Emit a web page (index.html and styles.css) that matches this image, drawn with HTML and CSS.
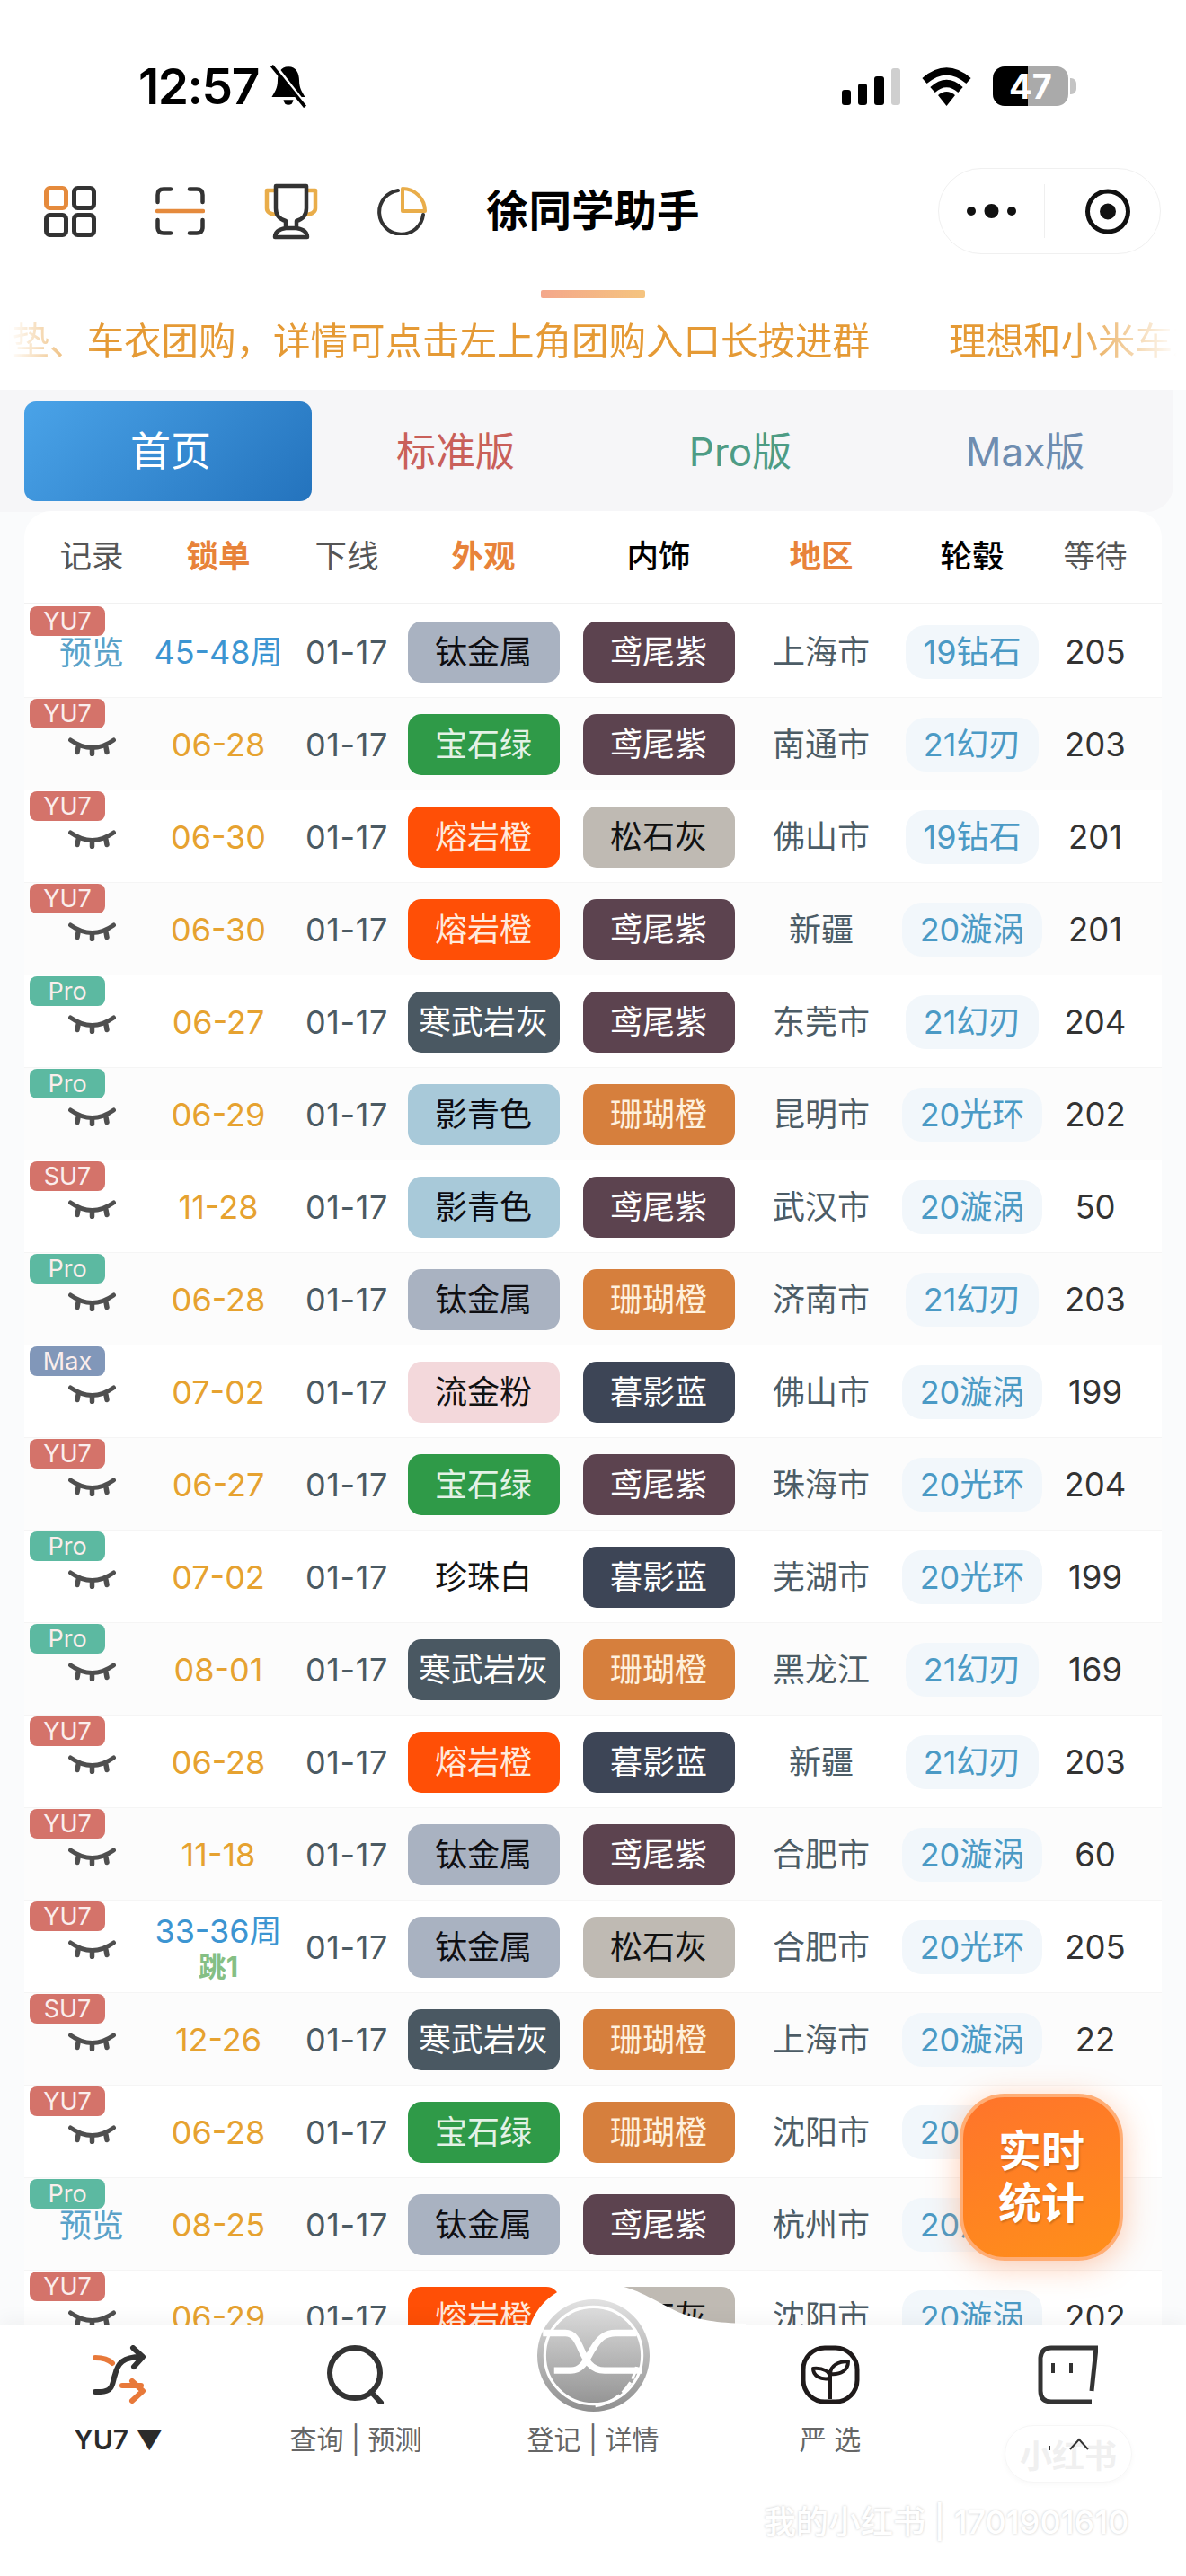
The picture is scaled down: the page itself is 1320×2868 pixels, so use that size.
FILE: index.html
```html
<!DOCTYPE html>
<html lang="zh-CN">
<head>
<meta charset="utf-8">
<title>徐同学助手</title>
<link rel="stylesheet" href="styles.css">
</head>
<body>
<svg class="defs" width="0" height="0" aria-hidden="true">
  <symbol id="eye" viewBox="0 0 53 21">
    <path d="M2.500 3 Q26.500 20 50.500 3" fill="none" stroke="#4f4f4f" stroke-width="5" stroke-linecap="round"/>
    <path d="M11 11 L10 16.500 M26.500 13 V18.500 M42 11 L43 16.500" fill="none" stroke="#4f4f4f" stroke-width="5.500" stroke-linecap="round"/>
  </symbol>
</svg>
<div class="page">
  <header class="status">
    <div class="status-left">
      <span class="time">12:57</span>
      <svg class="bell" width="46" height="48" viewBox="0 0 42 44"><path d="M21 2 C13 2 10 9 10 16 C10 24 7 28 4 33 H38 C35 28 32 24 32 16 C32 9 29 2 21 2Z" fill="#000"/><path d="M16 36 a5 5 0 0 0 10 0Z" fill="#000"/><path d="M8 3 L39 43" stroke="#fff" stroke-width="5"/><path d="M4 1 L38 43" stroke="#000" stroke-width="3.500"/></svg>
    </div>
    <div class="status-right">
      <svg width="65" height="41" viewBox="0 0 65 41"><rect x="0" y="24" width="10" height="17" rx="3" fill="#000"/><rect x="18" y="17" width="10" height="24" rx="3" fill="#000"/><rect x="36" y="9" width="11" height="32" rx="3" fill="#000"/><rect x="55" y="0" width="10" height="41" rx="3" fill="#cfcfcf"/></svg>
      <svg width="57" height="43" viewBox="0 0 57 43"><path d="M4 15 Q28.500 -6 53 15" fill="none" stroke="#000" stroke-width="8"/><path d="M13 25 Q28.500 11 44 25" fill="none" stroke="#000" stroke-width="8"/><path d="M19 31 Q28.500 23 38 31 L28.500 43Z" fill="#000"/></svg>
      <div class="battery"><span>47</span></div>
    </div>
  </header>

  <div class="topbar">
    <div class="top-icons">
      <svg width="58" height="57" viewBox="0 0 58 57" fill="none" stroke-width="5"><rect x="2.500" y="2.500" width="22" height="22" rx="4" stroke="#e58a3c"/><rect x="33.500" y="2.500" width="22" height="22" rx="4" stroke="#333"/><rect x="2.500" y="32.500" width="22" height="22" rx="4" stroke="#333"/><rect x="33.500" y="32.500" width="22" height="22" rx="4" stroke="#333"/></svg>
      <svg width="55" height="54" viewBox="0 0 55 54" fill="none" stroke-width="4.500" stroke-linecap="round"><path d="M17 2.500 H9 Q2.500 2.500 2.500 9 V17 M38 2.500 H46 Q52.500 2.500 52.500 9 V17 M2.500 37 V45 Q2.500 51.500 9 51.500 H17 M52.500 37 V45 Q52.500 51.500 46 51.500 H38" stroke="#333"/><path d="M2 27 H53" stroke="#e58a3c"/></svg>
      <svg width="60" height="63" viewBox="0 0 60 63" fill="none" stroke-width="4.500" stroke-linecap="round" stroke-linejoin="round"><path d="M13 8 H3 V28 Q3 34 14 35 M47 8 H57 V28 Q57 34 46 35" stroke="#e9ad4a"/><path d="M13 3 H47 V28 Q47 39 36 42 V50 H24 V42 Q13 39 13 28Z M24 50 Q12 52 12 60 H48 Q48 52 36 50" stroke="#333"/></svg>
      <svg width="55" height="54" viewBox="0 0 55 54" fill="none" stroke-width="4" stroke-linecap="round"><path d="M23 4 A24.500 24.500 0 1 0 51 31" stroke="#333"/><path d="M28 2 A25 25 0 0 1 53 27 H28Z" stroke="#e9ad4a" stroke-linejoin="round"/></svg>
    </div>
    <h1 class="title">徐同学助手</h1>
    <div class="capsule">
      <div class="capsule-part"><svg width="55" height="18" viewBox="0 0 55 18"><circle cx="5" cy="9" r="5" fill="#111"/><circle cx="27.500" cy="9" r="8" fill="#111"/><circle cx="50" cy="9" r="5" fill="#111"/></svg></div>
      <div class="capsule-part capsule-target"><svg width="50" height="51" viewBox="0 0 50 51"><circle cx="25" cy="25.500" r="22.500" fill="none" stroke="#111" stroke-width="5"/><circle cx="25" cy="25.500" r="9" fill="#111"/></svg></div>
    </div>
  </div>

  <div class="indicator"></div>
  <div class="notice">
    <div class="notice-track">
      <span>脚垫、车衣团购&#65292;详情可点击左上角团购入口长按进群</span>
      <span>理想和小米车友</span>
    </div>
  </div>

  <main class="main">
    <nav class="tabs">
      <a class="tab tab-home">首页</a>
      <a class="tab tab-std">标准版</a>
      <a class="tab tab-pro">Pro版</a>
      <a class="tab tab-max">Max版</a>
    </nav>
    <section class="card">
      <div class="grid head">
        <span class="h-gray">记录</span><span class="h-orange">锁单</span><span class="h-gray">下线</span><span class="h-orange">外观</span><span class="h-black">内饰</span><span class="h-orange">地区</span><span class="h-black">轮毂</span><span class="h-gray">等待</span>
      </div>
      <div class="rows">
        <div class="grid row"><b class="tag tag-red">YU7</b><span class="rec">预览</span><span class="lock lock-blue">45-48周</span><span class="off">01-17</span><span class="pill ti">钛金属</span><span class="pill iris">鸢尾紫</span><span class="city">上海市</span><span class="hub"><i>19钻石</i></span><span class="wait">205</span></div>
        <div class="grid row"><b class="tag tag-red">YU7</b><span class="rec"><svg class="eye"><use href="#eye"/></svg></span><span class="lock">06-28</span><span class="off">01-17</span><span class="pill jade">宝石绿</span><span class="pill iris">鸢尾紫</span><span class="city">南通市</span><span class="hub"><i>21幻刃</i></span><span class="wait">203</span></div>
        <div class="grid row"><b class="tag tag-red">YU7</b><span class="rec"><svg class="eye"><use href="#eye"/></svg></span><span class="lock">06-30</span><span class="off">01-17</span><span class="pill lava">熔岩橙</span><span class="pill stone">松石灰</span><span class="city">佛山市</span><span class="hub"><i>19钻石</i></span><span class="wait">201</span></div>
        <div class="grid row"><b class="tag tag-red">YU7</b><span class="rec"><svg class="eye"><use href="#eye"/></svg></span><span class="lock">06-30</span><span class="off">01-17</span><span class="pill lava">熔岩橙</span><span class="pill iris">鸢尾紫</span><span class="city">新疆</span><span class="hub"><i>20漩涡</i></span><span class="wait">201</span></div>
        <div class="grid row"><b class="tag tag-green">Pro</b><span class="rec"><svg class="eye"><use href="#eye"/></svg></span><span class="lock">06-27</span><span class="off">01-17</span><span class="pill slate">寒武岩灰</span><span class="pill iris">鸢尾紫</span><span class="city">东莞市</span><span class="hub"><i>21幻刃</i></span><span class="wait">204</span></div>
        <div class="grid row"><b class="tag tag-green">Pro</b><span class="rec"><svg class="eye"><use href="#eye"/></svg></span><span class="lock">06-29</span><span class="off">01-17</span><span class="pill cyan">影青色</span><span class="pill coral">珊瑚橙</span><span class="city">昆明市</span><span class="hub"><i>20光环</i></span><span class="wait">202</span></div>
        <div class="grid row"><b class="tag tag-red">SU7</b><span class="rec"><svg class="eye"><use href="#eye"/></svg></span><span class="lock">11-28</span><span class="off">01-17</span><span class="pill cyan">影青色</span><span class="pill iris">鸢尾紫</span><span class="city">武汉市</span><span class="hub"><i>20漩涡</i></span><span class="wait">50</span></div>
        <div class="grid row"><b class="tag tag-green">Pro</b><span class="rec"><svg class="eye"><use href="#eye"/></svg></span><span class="lock">06-28</span><span class="off">01-17</span><span class="pill ti">钛金属</span><span class="pill coral">珊瑚橙</span><span class="city">济南市</span><span class="hub"><i>21幻刃</i></span><span class="wait">203</span></div>
        <div class="grid row"><b class="tag tag-blue">Max</b><span class="rec"><svg class="eye"><use href="#eye"/></svg></span><span class="lock">07-02</span><span class="off">01-17</span><span class="pill rose">流金粉</span><span class="pill dusk">暮影蓝</span><span class="city">佛山市</span><span class="hub"><i>20漩涡</i></span><span class="wait">199</span></div>
        <div class="grid row"><b class="tag tag-red">YU7</b><span class="rec"><svg class="eye"><use href="#eye"/></svg></span><span class="lock">06-27</span><span class="off">01-17</span><span class="pill jade">宝石绿</span><span class="pill iris">鸢尾紫</span><span class="city">珠海市</span><span class="hub"><i>20光环</i></span><span class="wait">204</span></div>
        <div class="grid row"><b class="tag tag-green">Pro</b><span class="rec"><svg class="eye"><use href="#eye"/></svg></span><span class="lock">07-02</span><span class="off">01-17</span><span class="pill pearl">珍珠白</span><span class="pill dusk">暮影蓝</span><span class="city">芜湖市</span><span class="hub"><i>20光环</i></span><span class="wait">199</span></div>
        <div class="grid row"><b class="tag tag-green">Pro</b><span class="rec"><svg class="eye"><use href="#eye"/></svg></span><span class="lock">08-01</span><span class="off">01-17</span><span class="pill slate">寒武岩灰</span><span class="pill coral">珊瑚橙</span><span class="city">黑龙江</span><span class="hub"><i>21幻刃</i></span><span class="wait">169</span></div>
        <div class="grid row"><b class="tag tag-red">YU7</b><span class="rec"><svg class="eye"><use href="#eye"/></svg></span><span class="lock">06-28</span><span class="off">01-17</span><span class="pill lava">熔岩橙</span><span class="pill dusk">暮影蓝</span><span class="city">新疆</span><span class="hub"><i>21幻刃</i></span><span class="wait">203</span></div>
        <div class="grid row"><b class="tag tag-red">YU7</b><span class="rec"><svg class="eye"><use href="#eye"/></svg></span><span class="lock">11-18</span><span class="off">01-17</span><span class="pill ti">钛金属</span><span class="pill iris">鸢尾紫</span><span class="city">合肥市</span><span class="hub"><i>20漩涡</i></span><span class="wait">60</span></div>
        <div class="grid row"><b class="tag tag-red">YU7</b><span class="rec"><svg class="eye"><use href="#eye"/></svg></span><span class="lock lock-blue">33-36周<em>跳1</em></span><span class="off">01-17</span><span class="pill ti">钛金属</span><span class="pill stone">松石灰</span><span class="city">合肥市</span><span class="hub"><i>20光环</i></span><span class="wait">205</span></div>
        <div class="grid row"><b class="tag tag-red">SU7</b><span class="rec"><svg class="eye"><use href="#eye"/></svg></span><span class="lock">12-26</span><span class="off">01-17</span><span class="pill slate">寒武岩灰</span><span class="pill coral">珊瑚橙</span><span class="city">上海市</span><span class="hub"><i>20漩涡</i></span><span class="wait">22</span></div>
        <div class="grid row"><b class="tag tag-red">YU7</b><span class="rec"><svg class="eye"><use href="#eye"/></svg></span><span class="lock">06-28</span><span class="off">01-17</span><span class="pill jade">宝石绿</span><span class="pill coral">珊瑚橙</span><span class="city">沈阳市</span><span class="hub"><i>20光环</i></span></div>
        <div class="grid row"><b class="tag tag-green">Pro</b><span class="rec">预览</span><span class="lock">08-25</span><span class="off">01-17</span><span class="pill ti">钛金属</span><span class="pill iris">鸢尾紫</span><span class="city">杭州市</span><span class="hub"><i>20漩涡</i></span></div>
        <div class="grid row"><b class="tag tag-red">YU7</b><span class="rec"><svg class="eye"><use href="#eye"/></svg></span><span class="lock">06-29</span><span class="off">01-17</span><span class="pill lava">熔岩橙</span><span class="pill stone">松石灰</span><span class="city">沈阳市</span><span class="hub"><i>20漩涡</i></span><span class="wait">202</span></div>
      </div>
    </section>
  </main>

  <div class="float-stat">实时<br>统计</div>

  <footer class="tabbar">
    <svg class="bump" width="300" height="50" viewBox="0 0 300 50"><path d="M20 50 C30 22 55 3 90 3 C125 3 140 12 165 25 C185 36 205 47 260 48 V50Z" fill="#fff"/></svg>
    <div class="nav-item nav-active">
      <svg class="nav-icon" width="59" height="66" viewBox="0 0 59 66" fill="none" stroke-width="6" stroke-linecap="round" stroke-linejoin="round"><path d="M3 14 C10 14 17 15 22 20" stroke="#e8793a"/><path d="M33 45 H54 M44 40 L56 51 L44 62" stroke="#e8793a"/><path d="M3 52 H9 C24 52 22 40 25 33 C28 20 34 13 54 13 M45 3 L56 13 L46 24" stroke="#333"/></svg>
      <span class="nav-label">YU7 ▼</span>
    </div>
    <div class="nav-item">
      <svg class="nav-icon" width="64" height="66" viewBox="0 0 64 66" fill="none" stroke="#333" stroke-width="6" stroke-linecap="round"><circle cx="31" cy="31" r="28"/><path d="M49 52 L60 64"/></svg>
      <span class="nav-label">查询 | 预测</span>
    </div>
    <div class="nav-item">
      <div class="nav-icon nav-spacer"></div>
      <span class="nav-label">登记 | 详情</span>
    </div>
    <div class="nav-item">
      <svg class="nav-icon" width="66" height="66" viewBox="0 0 66 66" fill="none" stroke="#1f1a1a" stroke-width="5"><rect x="3" y="3" width="60" height="60" rx="24"/><path d="M33 60 V28" stroke-width="4"/><path d="M33 32 C33 23 42 18 53 18 C53 28 45 33 33 32Z M33 37 C33 29 25 25 14 26 C14 34 22 39 33 37Z" stroke-width="4" stroke-linejoin="round"/></svg>
      <span class="nav-label">严 选</span>
    </div>
    <div class="nav-item">
      <svg class="nav-icon" width="67" height="66" viewBox="0 0 67 66" fill="none" stroke="#333" stroke-width="5"><path d="M60 51 L65 3 H15 Q4 3 3 14 V51 Q3 63 15 63 H60"/><path d="M17 20 V31 M37 20 V31" stroke-width="4"/></svg>
      <span class="nav-label nav-hidden">我</span>
    </div>
    <svg class="logo" width="125" height="127" viewBox="0 0 120 120">
      <defs>
        <linearGradient id="disc" x1="0" y1="0" x2="0" y2="1"><stop offset="0" stop-color="#e2e2e2"/><stop offset="1" stop-color="#8f8f8f"/></linearGradient>
      </defs>
      <circle cx="60" cy="60" r="60" fill="url(#disc)"/>
      <circle cx="60" cy="60" r="52" fill="none" stroke="#fff" stroke-width="3"/>
      <path d="M106 72 A53 53 0 0 1 62 114" fill="none" stroke="#fff" stroke-width="3" stroke-dasharray="14 4"/>
      <path d="M6 36 H30 C50 36 44 76 72 76 H112 M18 76 H36 C50 76 54 60 60 52 C66 42 72 36 84 36 H106" fill="none" stroke="#fff" stroke-width="7"/>
    </svg>
    <div class="mark-pill"><span>小红书</span><svg width="48" height="20" viewBox="0 0 48 20"><path d="M3 10 V15 M26 14 L36 3 L46 14" fill="none" stroke="#333" stroke-width="2"/></svg></div>
    <div class="mark-text">我的小红书 | 1701901610</div>
  </footer>
</div>
</body>
</html>
```

FILE: styles.css
```css
* { box-sizing: border-box; }
html, body { margin: 0; padding: 0; }
body {
  font-family: Inter, "Noto Sans CJK SC", "Liberation Sans", sans-serif;
  background: #fff;
  color: #111;
}
.defs { position: absolute; }
.page {
  position: relative;
  width: 1320px;
  height: 2868px;
  overflow: hidden;
  background: #fff;
}

/* status bar */
.status {
  height: 187px;
  padding: 74px 131px 0 154px;
  display: flex;
  justify-content: space-between;
  align-items: flex-start;
}
.status-left { display: flex; align-items: center; gap: 10px; height: 44px; }
.time { font-size: 55px; font-weight: 600; letter-spacing: -1.500px; line-height: 44px; color: #000; }
.status-right { display: flex; align-items: center; gap: 23px; height: 44px; }
.battery {
  position: relative;
  width: 84px;
  height: 44px;
  border-radius: 13px;
  background: linear-gradient(90deg, #000 47%, #aaa 47%);
  display: flex;
  align-items: center;
  justify-content: center;
  color: #fff;
  font-size: 38px;
  font-weight: 700;
}
.battery::after {
  content: "";
  position: absolute;
  right: -9px;
  top: 13px;
  width: 7px;
  height: 18px;
  border-radius: 0 6px 6px 0;
  background: #c4c4c4;
}

/* title row */
.topbar {
  height: 96px;
  padding: 0 28px 0 49px;
  display: flex;
  align-items: center;
}
.top-icons { display: flex; align-items: center; gap: 66px; }
.title { margin: 0 0 0 66px; font-size: 47.500px; font-weight: 700; color: #000; line-height: 1; letter-spacing: 0; }
.capsule {
  margin-left: auto;
  width: 248px;
  height: 96px;
  border: 1px solid #f0f0f0;
  border-radius: 48px;
  display: flex;
  align-items: center;
}
.capsule-part { flex: 1; display: flex; justify-content: center; align-items: center; height: 60px; }
.capsule-part:first-child { border-right: 1px solid #efefef; }
.capsule-target { padding-left: 12px; }

/* marquee */
.indicator {
  width: 116px;
  height: 9px;
  margin: 40px 0 0 602px;
  border-radius: 2px;
  background: linear-gradient(90deg, #f4a78b, #f5c47f);
}
.notice {
  height: 102px;
  padding-bottom: 6px;
  display: flex;
  align-items: center;
  overflow: hidden;
  -webkit-mask-image: linear-gradient(90deg, transparent 10px, #000 110px, #000 1190px, transparent 1310px);
  mask-image: linear-gradient(90deg, transparent 10px, #000 110px, #000 1190px, transparent 1310px);
}
.notice-track {
  display: flex;
  gap: 88px;
  margin-left: -28px;
  white-space: nowrap;
  font-size: 41.500px;
  line-height: 60px;
  color: #e59a35;
}

/* main */
.main { background: #fafbfc; padding-bottom: 40px; }
.tabs {
  width: 1306px;
  height: 136px;
  padding: 13px 0 12px 27px;
  display: grid;
  grid-template-columns: 320px 317px 317px 317px;
  background: #f6f6f8;
  border-radius: 0 0 30px 0;
}
.tab {
  display: flex;
  align-items: center;
  justify-content: center;
  padding-left: 3px;
  font-size: 44px;
  line-height: 1;
  height: 111px;
}
.tab-home {
  padding-left: 6px;
  color: #fff;
  font-size: 45px;
  border-radius: 13px;
  background: linear-gradient(135deg, #4aa3e8, #2473bd);
}
.tab-std { color: #c9605a; }
.tab-pro { color: #4d9c85; }
.tab-max { color: #6f8db0; }

.card {
  width: 1266px;
  margin: -1px 0 0 27px;
  background: #fff;
  border-radius: 30px 30px 0 0;
}
.grid {
  display: grid;
  grid-template-columns: 132px 150px 136px 168px 222px 140px 196px 78px;
  padding-left: 9px;
  align-items: center;
  justify-items: center;
}
.head {
  height: 103px;
  border-bottom: 1px solid #f1f1f1;
  font-size: 35.500px;
  line-height: 1;
}
.h-gray { color: #555; }
.h-orange { color: #e8833a; font-weight: 700; }
.h-black { color: #000; font-weight: 500; }

.rows { padding-top: 2px; }
.row {
  position: relative;
  height: 103px;
  padding-top: 2px;
  border-bottom: 1px solid #f5f5f5;
}
.row:nth-child(even) { background: #fcfcfc; }
.tag {
  position: absolute;
  left: 6px;
  top: 1px;
  width: 84px;
  height: 33px;
  border-radius: 8px;
  display: flex;
  align-items: center;
  justify-content: center;
  color: #fbeeec;
  font-size: 27px;
  font-weight: 400;
  line-height: 1;
}
.tag-red { background: #d4736a; }
.tag-green { background: #5cb9a1; }
.tag-blue { background: #8197b9; }

.rec { font-size: 36px; color: #5aa2c9; line-height: 1; display: flex; padding-top: 2px; }
.eye { width: 53px; height: 21px; margin-top: 3px; }
.lock { font-size: 36px; color: #e6a230; line-height: 1; text-align: center; white-space: nowrap; }
.lock-blue { color: #3c95d2; }
.lock em { display: block; font-style: normal; font-size: 31px; color: #85bf84; font-weight: 700; margin-top: 6px; }
.off { font-size: 36px; letter-spacing: .6px; color: #4b5a63; line-height: 1; }
.pill {
  width: 169px;
  height: 68px;
  border-radius: 15px;
  display: flex;
  align-items: center;
  justify-content: center;
  font-size: 36px;
  line-height: 1;
  white-space: nowrap;
}
.ti { background: #a9b2c1; color: #0e0e12; }
.iris { background: #5c434f; color: #fff; }
.jade { background: #2f9a48; color: #e4f2e6; }
.lava { background: #ff4f06; color: #ffe9dc; }
.stone { background: #bfbab3; color: #111; }
.slate { background: #4a5862; color: #fff; }
.cyan { background: #a8c9d9; color: #0c0c12; }
.coral { background: #d67f3d; color: #fff1dd; }
.rose { background: #f3d8db; color: #111; }
.dusk { background: #3d4556; color: #fff; }
.pearl { background: #fff; color: #111; }
.city { font-size: 36px; color: #4c5c66; line-height: 1; }
.hub i {
  display: block;
  font-style: normal;
  padding: 0 20px;
  height: 60px;
  line-height: 60px;
  border-radius: 22px;
  background: #f2f7fb;
  color: #4b9ac5;
  font-size: 36px;
  white-space: nowrap;
}
.wait { font-size: 36.500px; color: #333; line-height: 1; }

/* floating button */
.float-stat {
  position: absolute;
  left: 1068px;
  top: 2331px;
  width: 182px;
  height: 186px;
  border: 4px solid #ffad75;
  border-radius: 50px;
  background: linear-gradient(160deg, #ff742b, #ff8f1a);
  box-shadow: 0 6px 34px rgba(255, 120, 50, .38);
  display: flex;
  align-items: center;
  justify-content: center;
  text-align: center;
  color: #fff;
  font-size: 48px;
  font-weight: 700;
  line-height: 58px;
  text-shadow: 1px 2px 2px rgba(0, 0, 0, .18);
}

/* bottom nav */
.tabbar {
  position: absolute;
  left: 0;
  top: 2588px;
  width: 1320px;
  height: 280px;
  background: #fff;
  box-shadow: 0 -8px 18px rgba(0, 0, 0, .035);
  display: grid;
  grid-template-columns: repeat(5, 264px);
  align-items: start;
  padding-top: 23px;
}
.bump { position: absolute; left: 570px; top: -49px; }
.nav-item { display: flex; flex-direction: column; align-items: center; position: relative; }
.nav-icon { display: block; height: 66px; }
.nav-spacer { width: 66px; }
.nav-label { margin-top: 19px; font-size: 30px; line-height: 40px; color: #666; white-space: nowrap; }
.nav-active .nav-label { color: #2b2b2b; font-weight: 600; }
.nav-hidden { visibility: hidden; }
.logo { position: absolute; left: 598px; top: -29px; }
.mark-pill {
  position: absolute;
  left: 1118px;
  top: 112px;
  width: 142px;
  height: 64px;
  border-radius: 32px;
  border: 1px solid #f6f6f6;
  box-shadow: 0 2px 6px rgba(0, 0, 0, .03);
  display: flex;
  align-items: center;
  justify-content: center;
  color: #f0f0f0;
  font-size: 36px;
  font-weight: 700;
  white-space: nowrap;
  overflow: hidden;
}
.mark-pill svg { position: absolute; left: 46px; top: 12px; }
.mark-text {
  position: absolute;
  left: 850px;
  top: 198px;
  font-size: 36px;
  line-height: 44px;
  color: #fff;
  font-weight: 500;
  white-space: nowrap;
  text-shadow: 0 0 3px rgba(0, 0, 0, .22);
}
```
